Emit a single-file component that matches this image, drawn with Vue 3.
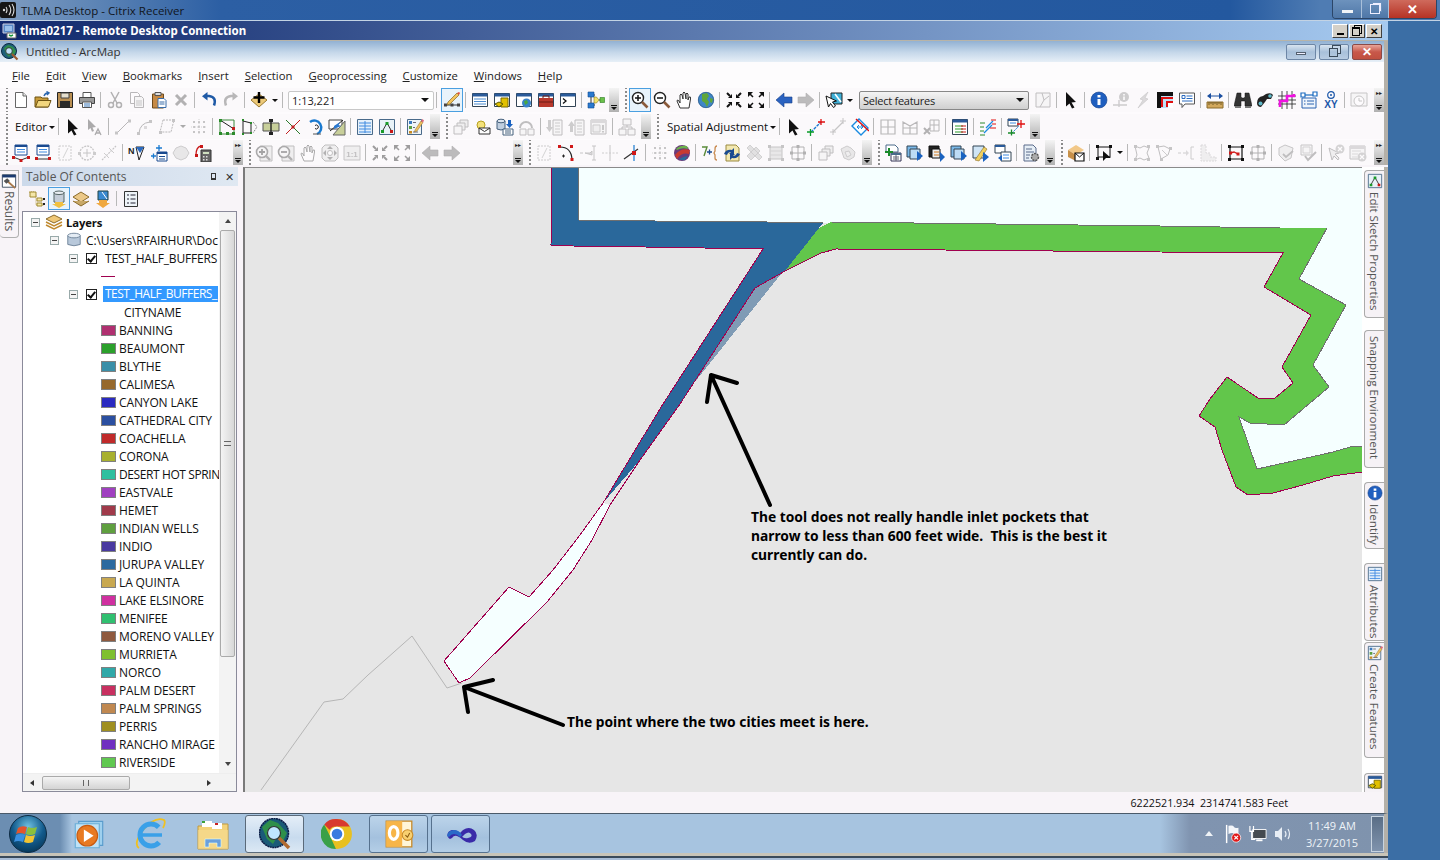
<template>
  <div class="screen">
    <!-- icon sprite -->
    <svg class="sprite" xmlns="http://www.w3.org/2000/svg">
      <symbol id="new" viewBox="0 0 18 18"><path d="M3.5 1.5h7.5l3.5 3.5v11.500h-11z" fill="#fff" stroke="#666"/><path d="M11 1.500v3.500h3.500" fill="#e8e8e8" stroke="#666"/></symbol>
      <symbol id="open" viewBox="0 0 18 18"><path d="M1 6h6l1 1h6v9H1z" fill="#c79a3a" stroke="#6d5312"/><path d="M1.500 16l2.500-6.500h13l-2.500 6.500z" fill="#f2d67e" stroke="#6d5312"/><path d="M10 5q1-3 4-3M12.500 0.500l2.500 1.500-2 2" fill="none" stroke="#2a66b0" stroke-width="1.400"/></symbol>
      <symbol id="save" viewBox="0 0 18 18"><path d="M1.500 1.500h15v15h-15z" fill="#b98f52" stroke="#222"/><path d="M5 2h8v5H5z" fill="#e6e0cf" stroke="#444"/><path d="M4 10h10v6.500H4z" fill="#2a2a2a"/></symbol>
      <symbol id="print" viewBox="0 0 18 18"><path d="M5 1.500h8v5H5z" fill="#fff" stroke="#555"/><path d="M1.500 6.500h15v6h-15z" fill="#9a9a9a" stroke="#444"/><path d="M4.500 11h9v5.500h-9z" fill="#fff" stroke="#555"/><path d="M6 13h6M6 15h6" stroke="#3a76b8"/></symbol>
      <symbol id="cut" viewBox="0 0 18 18"><path d="M5 1l6 11M13 1L7 12" stroke="#444" stroke-width="1.500" fill="none"/><circle cx="5" cy="14" r="2.500" fill="none" stroke="#444" stroke-width="1.500"/><circle cx="13" cy="14" r="2.500" fill="none" stroke="#444" stroke-width="1.500"/></symbol>
      <symbol id="copy" viewBox="0 0 18 18"><path d="M2.500 1.500h7l2 2v9h-9z" fill="#fff" stroke="#555"/><path d="M6.500 5.500h7l2 2v9h-9z" fill="#eee" stroke="#555"/><path d="M8 10h6M8 12h6M8 14h6" stroke="#777"/></symbol>
      <symbol id="paste" viewBox="0 0 18 18"><path d="M2.500 3h11v14h-11z" fill="#c68a45" stroke="#6d4a1a"/><path d="M5 1.500h6v3H5z" fill="#ddd" stroke="#555"/><path d="M8 7.500h6l2 2v7H8z" fill="#fff" stroke="#3a6ca8"/><path d="M9.500 11h5M9.500 13h5" stroke="#3a6ca8"/></symbol>
      <symbol id="del" viewBox="0 0 18 18"><path d="M4 4l10 10M14 4L4 14" stroke="#444" stroke-width="3"/></symbol>
      <symbol id="undo" viewBox="0 0 18 18"><path d="M14 14.500Q17 6 9 5H6" fill="none" stroke="#1f5aa6" stroke-width="2.500"/><path d="M7.500 1L2 5.200l5.500 4.300z" fill="#1f5aa6"/></symbol>
      <symbol id="redo" viewBox="0 0 18 18"><path d="M4 14.500Q1 6 9 5h3" fill="none" stroke="#1f5aa6" stroke-width="2.500"/><path d="M10.500 1L16 5.200l-5.500 4.300z" fill="#1f5aa6"/></symbol>
      <symbol id="add" viewBox="0 0 18 18"><path d="M9 3l8 6-8 7-8-7z" fill="#edc978" stroke="#9a7a30"/><path d="M9 1v11M3.500 6.500h11" stroke="#000" stroke-width="2.400"/></symbol>
      <symbol id="editbtn" viewBox="0 0 18 18"><path d="M2 14h14" stroke="#333"/><path d="M1 12.500h3v3H1zM7.500 12.500h3v3h-3zM14 12.500h3v3h-3z" fill="#444"/><path d="M5 11L14 2l2 2-9 9-3 1z" fill="#f3c35c" stroke="#8a6a20" stroke-width=".7"/><path d="M14 2l2 2 1-2-1-1z" fill="#e0503c"/></symbol>
      <symbol id="wintable" viewBox="0 0 18 18"><path d="M1.500 2.500h15v13h-15z" fill="#fff" stroke="#345"/><path d="M1.500 2.500h15v3h-15z" fill="#2a5a9a"/><path d="M3 8h12M3 10.500h12M3 13h12" stroke="#4a8ad0"/></symbol>
      <symbol id="windb" viewBox="0 0 18 18"><path d="M1.500 2.500h15v13h-15z" fill="#fff" stroke="#345"/><path d="M1.500 2.500h15v3h-15z" fill="#2a5a9a"/><path d="M8 7h7v9H8z" fill="#e2c000" stroke="#7a6a00"/><path d="M2 13l4-2 4 2-4 3z" fill="#e2c000" stroke="#5a5a00"/></symbol>
      <symbol id="winglobe" viewBox="0 0 18 18"><path d="M1.500 2.500h15v13h-15z" fill="#fff" stroke="#345"/><path d="M1.500 2.500h15v3h-15z" fill="#2a5a9a"/><circle cx="11.500" cy="12" r="4.500" fill="#3a82c8"/><path d="M9 10l3-1 1 3-3 2z" fill="#4aa840"/></symbol>
      <symbol id="winred" viewBox="0 0 18 18"><path d="M1.500 2.500h15v13h-15z" fill="#fff" stroke="#345"/><path d="M1.500 2.500h15v3h-15z" fill="#2a5a9a"/><path d="M2 7h14v9H2z" fill="#b8382c"/><path d="M6 7v-2h6v2M2 11h14" stroke="#6a1a14" fill="none"/></symbol>
      <symbol id="winpy" viewBox="0 0 18 18"><path d="M1.500 2.500h15v13h-15z" fill="#fff" stroke="#345"/><path d="M1.500 2.500h15v3h-15z" fill="#2a5a9a"/><path d="M4 7.500l3 2.500-3 2.500" stroke="#111" stroke-width="1.300" fill="none"/></symbol>
      <symbol id="model" viewBox="0 0 18 18"><path d="M4 4v10M4 4h4M4 14h4M12 9h2" stroke="#333" fill="none"/><path d="M1 1h6v5H1zM1 12h6v5H1z" fill="#2a7ad0" stroke="#134a90" stroke-width=".6"/><path d="M7 6l2.500 0 2.500 3-2.500 3H7z" fill="#f2e26a" stroke="#8a7a20" stroke-width=".6"/><path d="M13 6.500h4.500v5H13z" fill="#6ac04a" stroke="#2a7a20" stroke-width=".6"/></symbol>
      <symbol id="zoomin" viewBox="0 0 18 18"><circle cx="7" cy="7" r="5.500" fill="#fff" stroke="#222" stroke-width="1.400"/><path d="M11 11l5.500 5.500" stroke="#8a5a3a" stroke-width="2.600"/><path d="M4 7h6M7 4v6" stroke="#111" stroke-width="1.500"/></symbol>
      <symbol id="zoomout" viewBox="0 0 18 18"><circle cx="7" cy="7" r="5.500" fill="#fff" stroke="#222" stroke-width="1.400"/><path d="M11 11l5.500 5.500" stroke="#8a5a3a" stroke-width="2.600"/><path d="M4 7h6" stroke="#111" stroke-width="1.500"/></symbol>
      <symbol id="zin2" viewBox="0 0 18 18"><path d="M5 2h12v15H5z" fill="#ddd" stroke="#666"/><circle cx="7" cy="8" r="5.500" fill="#eee" stroke="#333" stroke-width="1.600"/><path d="M11 12l4 4" stroke="#444" stroke-width="2.400"/><path d="M4 8h6M7 5v6" stroke="#222" stroke-width="1.800"/></symbol>
      <symbol id="zout2" viewBox="0 0 18 18"><path d="M5 2h12v15H5z" fill="#ddd" stroke="#666"/><circle cx="7" cy="8" r="5.500" fill="#eee" stroke="#333" stroke-width="1.600"/><path d="M11 12l4 4" stroke="#444" stroke-width="2.400"/><path d="M4 8h6" stroke="#222" stroke-width="1.800"/></symbol>
      <symbol id="dirpan" viewBox="0 0 18 18"><path d="M4 1h10l3 3v10l-3 3H4l-3-3V4z" fill="#ddd" stroke="#666"/><path d="M9 2l3 3H6zM9 16l3-3H6zM2 9l3-3v6zM16 9l-3-3v6z" fill="#444"/><circle cx="9" cy="9" r="2.500" fill="#fff" stroke="#666"/></symbol>
      <symbol id="pan" viewBox="0 0 18 18"><path d="M5 17L2 10q0-2 2 0l1 2V4q1-2 2 0l1 4V2q1-2 2 0l1 6V3q1-2 2 0v6l1-3q2-1 1.500 2L14 17z" fill="#fff" stroke="#333"/></symbol>
      <symbol id="globe" viewBox="0 0 18 18"><circle cx="9" cy="9" r="8" fill="#3f86c6"/><path d="M5 3l5-1 2 3-2 3 2 3-2 5-2-4-3-2zM13 7l3 1-1 4-2-1z" fill="#5fa63a"/><circle cx="9" cy="9" r="7.700" fill="none" stroke="#2a4e78" stroke-width=".6"/></symbol>
      <symbol id="fixin" viewBox="0 0 18 18"><path d="M2 2l3 3M16 2l-3 3M2 16l3-3M16 16l-3-3" stroke="#111" stroke-width="2"/><path d="M7 3v4H3zM11 3v4h4zM7 15v-4H3zM11 15v-4h4z" fill="#111"/></symbol>
      <symbol id="fixout" viewBox="0 0 18 18"><path d="M1 1h5l-5 5zM17 1v5l-5-5zM1 17v-5l5 5zM17 17h-5l5-5z" fill="#111"/><path d="M3 3l3 3M15 3l-3 3M3 15l3-3M15 15l-3-3" stroke="#111" stroke-width="1.500"/></symbol>
      <symbol id="back" viewBox="0 0 18 18"><path d="M1 9l8-7v4h8v6H9v4z" fill="#2a62c0" stroke="#1a3f88" stroke-width=".6"/></symbol>
      <symbol id="fwd" viewBox="0 0 18 18"><path d="M17 9L9 2v4H1v6h8v4z" fill="#2a62c0" stroke="#1a3f88" stroke-width=".6"/></symbol>
      <symbol id="selfeat" viewBox="0 0 18 18"><path d="M6 2h11v11H6z" fill="#3fb0d8" stroke="#222"/><path d="M10 3l6 8" stroke="#fff" stroke-width="1.500"/><path d="M1 5l2.500 11 2-3.500 3 4 2-1.500-3-4 4-1z" fill="#fff" stroke="#111"/></symbol>
      <symbol id="edit" viewBox="0 0 18 18"><path d="M2 2h14v14H2z" fill="#eee" stroke="#666"/><path d="M8 2l2 7-4 7M10 9l5-4" stroke="#666" fill="none"/></symbol>
      <symbol id="arrow" viewBox="0 0 18 18"><path d="M4 1l10 10-4.500.5 3 5-2.500 1-2.500-5L4 15.500z" fill="#111"/></symbol>
      <symbol id="arrowa" viewBox="0 0 18 18"><path d="M2 1l8 8-3.500.5L8 13l-2 .8L4.500 10 2 12z" fill="#333"/><path d="M9 17l3-6 3 6M10.500 15h3" stroke="#333" stroke-width="1.300" fill="none"/></symbol>
      <symbol id="identify" viewBox="0 0 18 18"><circle cx="9" cy="9" r="8" fill="#1f5fbf" stroke="#123e88" stroke-width=".6"/><path d="M7.500 4h3v2.500h-3zM7.500 8h3v6h-3z" fill="#fff"/></symbol>
      <symbol id="hyper" viewBox="0 0 18 18"><circle cx="12" cy="6" r="5" fill="#888"/><path d="M1 14h14M7 9v7" stroke="#888" stroke-width="1.400"/><path d="M11.200 3h1.600v1.500h-1.600zM11.200 5.500h1.600V9h-1.600z" fill="#fff"/></symbol>
      <symbol id="bolt" viewBox="0 0 18 18"><path d="M14 1L6 8l3 1-5 8 10-9-3-1z" fill="#aaa" stroke="#777" stroke-width=".6"/></symbol>
      <symbol id="redcorner" viewBox="0 0 18 18"><path d="M1 1h16v4H5v12H1z" fill="#111"/><path d="M5 5h12v12H5z" fill="#bfe0f5"/><path d="M6 16V7h11M11 16v-5h6" stroke="#e01010" stroke-width="2" fill="none"/><path d="M12 12h5v5h-5z" fill="#fff"/></symbol>
      <symbol id="msg" viewBox="0 0 18 18"><path d="M1.500 2h15v11H7l-3 3.500V13H1.500z" fill="#fff" stroke="#555"/><path d="M4 4.500h3v3H4zM8.500 5h6M8.500 7.500h6M4 10h10.500" stroke="#2a6ac0" fill="none"/></symbol>
      <symbol id="measure" viewBox="0 0 18 18"><path d="M1 11h16v6H1z" fill="#d2a85c" stroke="#8a6a2a"/><path d="M3 11v3M5 11v2M7 11v3M9 11v2M11 11v3M13 11v2M15 11v3" stroke="#5a4a1a" stroke-width=".8"/><path d="M1 5l4-3v6zM17 5l-4-3v6z" fill="#1a4ea0"/><path d="M5 5h8" stroke="#1a4ea0"/></symbol>
      <symbol id="binoc" viewBox="0 0 18 18"><path d="M3 2h4v4l1 1h2l1-1V2h4l3 13h-7V10H7v5H0z" fill="#333" stroke="#111" stroke-width=".5"/><path d="M1 15h6v2H1zM11 15h6v2h-6z" fill="#777"/></symbol>
      <symbol id="binoc2" viewBox="0 0 18 18"><path d="M1 12q0-6 6-7l3-2q5-2 7 1l-2 4-4 0-2 3-4 5q-4 0-4-4z" fill="#222"/><circle cx="4.500" cy="12.500" r="2" fill="#5fb8c8"/><circle cx="14" cy="5" r="1.800" fill="#5fb8c8"/></symbol>
      <symbol id="magenta" viewBox="0 0 18 18"><path d="M0 5h18M0 9h18M0 13h18M4 0v18M9 0v18M14 0v18" stroke="#222" stroke-width=".8"/><path d="M2 16v-6h7V5h7V3" stroke="#f010e0" stroke-width="2.600" fill="none"/></symbol>
      <symbol id="net" viewBox="0 0 18 18"><path d="M2 7h14v10H2z" fill="#eef4fb" stroke="#2a62b0"/><path d="M7 10h7M7 13h7M4 10h1.500M4 13h1.500" stroke="#2a62b0"/><path d="M1 2h4v4H1zM13 1h4v4h-4z" fill="#fff" stroke="#1a6ac0" stroke-width="1.200"/><path d="M5 4h8" stroke="#1a6ac0" stroke-width="1.200"/></symbol>
      <symbol id="xy" viewBox="0 0 18 18"><circle cx="9" cy="4" r="3.300" fill="none" stroke="#1a56a8" stroke-width="1.200"/><circle cx="9" cy="4" r="1" fill="#1a56a8"/><text x="9" y="16.500" font-size="10" font-weight="700" font-family="Liberation Sans" text-anchor="middle" fill="#1a56a8">XY</text></symbol>
      <symbol id="clock" viewBox="0 0 18 18"><path d="M1 2h16v13H1z" fill="#eee" stroke="#777"/><circle cx="9" cy="10" r="5" fill="#fff" stroke="#777"/><path d="M9 7v3h3" stroke="#777" fill="none"/></symbol>
      <symbol id="line" viewBox="0 0 18 18"><path d="M3 15L15 3" stroke="#555"/><path d="M1 13.500h3v3H1zM14 1.500h3v3h-3z" fill="#777"/></symbol>
      <symbol id="curve" viewBox="0 0 18 18"><path d="M3 15Q4 5 14 4" stroke="#555" fill="none"/><path d="M1 14h3v3H1zM13 2h3v3h-3z" fill="#777"/><path d="M8 8h3v3H8z" fill="#aaa"/></symbol>
      <symbol id="poly" viewBox="0 0 18 18"><path d="M5 2h11l-3 12H2z" fill="none" stroke="#555" stroke-dasharray="2 1"/><path d="M1 13h3v3H1zM14 1h3v3h-3z" fill="#777"/></symbol>
      <symbol id="dots" viewBox="0 0 18 18"><path d="M3 3h2v2H3zM8 3h2v2H8zM13 3h2v2h-2zM3 8h2v2H3zM8 8h2v2H8zM13 8h2v2h-2zM3 13h2v2H3zM8 13h2v2H8zM13 13h2v2h-2z" fill="#777"/><path d="M1 9h16M9 1v16" stroke="#999" stroke-dasharray="1 1"/></symbol>
      <symbol id="sk1" viewBox="0 0 18 18"><path d="M2 2h14v14H2z" fill="none" stroke="#3a8a3a"/><path d="M2 2l14 9" stroke="#222"/><path d="M1 1h3v3H1zM14 14h3v3h-3zM1 14h3v3H1zM8 14h3v3H8z" fill="#2a8a2a"/><path d="M14 9h3v3h-3z" fill="#c02020"/></symbol>
      <symbol id="sk2" viewBox="0 0 18 18"><path d="M3 1v16M3 3l8 2v10H3" stroke="#222" fill="none"/><path d="M2 1h2v2H2zM2 15h2v2H2zM10 4h2v2h-2zM10 14h2v2h-2z" fill="#2a8a2a"/><path d="M13 4l4 5-4 6" stroke="#666" stroke-dasharray="1 1" fill="none"/></symbol>
      <symbol id="split" viewBox="0 0 18 18"><path d="M1 5h16v8H1z" fill="#c8cf9a" stroke="#555"/><path d="M9 1v16" stroke="#222" stroke-width="1.400"/><path d="M7 1h4v3H7zM7 14h4v3H7z" fill="#222"/></symbol>
      <symbol id="redx" viewBox="0 0 18 18"><path d="M2 2l14 14" stroke="#2a7a2a"/><path d="M16 2L2 16" stroke="#c02020"/><path d="M7.500 7.500h3v3h-3z" fill="#c02020"/></symbol>
      <symbol id="cycle" viewBox="0 0 18 18"><path d="M4 4a7 7 0 1 1 7 12" fill="none" stroke="#1a7ad0" stroke-width="2.400"/><path d="M7 16H15" stroke="#555"/><path d="M9 7.500a2 2 0 1 1 0 3" fill="none" stroke="#222"/></symbol>
      <symbol id="trim" viewBox="0 0 18 18"><path d="M1 2h13v9H1z" fill="#fff" stroke="#444"/><path d="M17 3v14H5z" fill="#c8cf9a" stroke="#666"/><path d="M2 13L15 2" stroke="#222"/><path d="M6 8l6-4-1.500 3 2.500 1-7 3z" fill="#2a7ad0"/></symbol>
      <symbol id="table" viewBox="0 0 18 18"><path d="M1.500 1.500h15v15h-15z" fill="#e4f0fb" stroke="#4a6a8a"/><path d="M3 5h12M3 8h12M3 11h12M3 14h12M9 3v12" stroke="#3f8ae0"/></symbol>
      <symbol id="props" viewBox="0 0 18 18"><path d="M1.500 1.500h15v15h-15z" fill="#e8f2f8" stroke="#4a6a8a"/><path d="M4.500 13L9 5l4.500 8" stroke="#333" fill="none"/><path d="M3 12h3v3H3zM7.500 4h3v3h-3z" fill="#1a9a2a"/><path d="M12 12h3v3h-3z" fill="#c81818"/></symbol>
      <symbol id="form" viewBox="0 0 18 18"><path d="M1.500 1.500h14v15h-14z" fill="#eef4f8" stroke="#4a6a8a"/><path d="M3 3h3v3H3z" fill="#3a7ac0"/><path d="M3 8h3v3H3z" fill="#5aa040"/><path d="M3 13h3v2.500H3z" fill="#c88a20"/><path d="M7 4.500h3M7 9.500h2M7 14h5" stroke="#667"/><path d="M9 12L15 3l2 1.500-6 8.500-2.500 1z" fill="#f0c060" stroke="#8a6a20" stroke-width=".5"/><path d="M15 3l2 1.500 1-2-1.500-1.500z" fill="#e06a7a"/></symbol>
      <symbol id="stack" viewBox="0 0 18 18"><path d="M8 2h8v7H8z" fill="#ddd" stroke="#666"/><path d="M5 5h8v7H5z" fill="#ddd" stroke="#666"/><path d="M2 8h8v8H2z" fill="#eee" stroke="#666"/></symbol>
      <symbol id="sun" viewBox="0 0 18 18"><circle cx="7" cy="7" r="4" fill="#f4e27a" stroke="#b8a020"/><path d="M5 10h11v6H5z" fill="#fff" stroke="#333"/><path d="M5 10l5.500 3.500L16 10" stroke="#333" fill="none"/></symbol>
      <symbol id="dbarrow" viewBox="0 0 18 18"><path d="M1 3v8q4 2 8 0V3" fill="#c0cfe0" stroke="#45607c"/><ellipse cx="5" cy="3" rx="4" ry="1.800" fill="#dde6f0" stroke="#45607c"/><path d="M7 11h10v6H7z" fill="#fff" stroke="#45607c"/><path d="M9 13h6M9 15h6" stroke="#45607c"/><path d="M12 2h3v4h2l-3.500 4L10 6h2z" fill="#1a62c0"/></symbol>
      <symbol id="arc" viewBox="0 0 18 18"><path d="M2 10a6 6 0 0 1 12 0" stroke="#666" stroke-width="2" fill="none"/><path d="M2 11h6v6H2zM10 11h6v6h-6z" fill="#eee" stroke="#666"/></symbol>
      <symbol id="docdn" viewBox="0 0 18 18"><path d="M7 2h9v15H7z" fill="#eee" stroke="#666"/><path d="M9 5h5M9 8h5M9 11h5M9 14h5" stroke="#888"/><path d="M2 2h3v7h2l-3.500 5L0 9h2z" fill="#888"/></symbol>
      <symbol id="docup" viewBox="0 0 18 18"><path d="M7 2h9v15H7z" fill="#eee" stroke="#666"/><path d="M9 5h5M9 8h5M9 11h5M9 14h5" stroke="#888"/><path d="M2 14h3V8h2L3.500 3 0 8h2z" fill="#888"/></symbol>
      <symbol id="docbang" viewBox="0 0 18 18"><path d="M1 2h15v14H1z" fill="#eee" stroke="#666"/><path d="M1 2h15v3H1z" fill="#aaa"/><path d="M3 7h7v7H3z" fill="#ddd" stroke="#888"/><path d="M13 7v5M13 13v1.500" stroke="#555" stroke-width="1.500"/></symbol>
      <symbol id="flow" viewBox="0 0 18 18"><path d="M5 1h8v6H5zM1 11h7v6H1zM10 11h7v6h-7z" fill="#eee" stroke="#666"/><path d="M9 7v2M4 11V9h10v2" stroke="#666" fill="none"/></symbol>
      <symbol id="rg" viewBox="0 0 18 18"><path d="M4 14L14 4" stroke="#1a7ad0" stroke-width="1.400" stroke-dasharray="3 1"/><path d="M11 4h7M14 1v6" stroke="#e01010" stroke-width="1.300"/><path d="M0 14h7M3.500 11v7" stroke="#0a9a2a" stroke-width="1.300"/></symbol>
      <symbol id="rg2" viewBox="0 0 18 18"><path d="M4 14L14 4" stroke="#777" stroke-width="1.300"/><path d="M11 3h6M14 0v6" stroke="#777"/><path d="M1 14h6M4 11v6" stroke="#777"/></symbol>
      <symbol id="bluerect" viewBox="0 0 18 18"><path d="M8 1l9 9-7 7-9-9z" fill="#fff" stroke="#1a8ae0" stroke-width="1.400"/><path d="M6 9h6M6 9l2-2M6 9l2 2M12 9l-2-2M12 9l-2 2" stroke="#1a8ae0"/><path d="M5 1l13 12" stroke="#e01010" stroke-width="1.400"/></symbol>
      <symbol id="grid" viewBox="0 0 18 18"><path d="M2 2h14v14H2zM9 2v14M2 9h14" fill="none" stroke="#555" stroke-width="1.200"/></symbol>
      <symbol id="envl" viewBox="0 0 18 18"><path d="M2 4l7 4 7-4v12H2zM2 10h14M9 8v8" fill="none" stroke="#555" stroke-width="1.200"/></symbol>
      <symbol id="gridx" viewBox="0 0 18 18"><path d="M7 2h9v11H7zM7 7h9M11 2v11" fill="none" stroke="#555"/><path d="M1 10l6 6M7 10l-6 6" stroke="#444" stroke-width="2"/></symbol>
      <symbol id="tarrow" viewBox="0 0 18 18"><path d="M1.500 1.500h15v15h-15z" fill="#fff" stroke="#345"/><path d="M1.500 1.500h15v3h-15z" fill="#2a5a9a"/><path d="M4 8h8M4 11h8M4 14h8" stroke="#2a9a2a"/><path d="M10 8h5M10 11h5M10 14h5" stroke="#c81818"/></symbol>
      <symbol id="lines" viewBox="0 0 18 18"><path d="M1 5h5M1 9h4M1 13h4M1 17h5" stroke="#2a8a2a"/><path d="M5 15L13 7M7 10l7-7" stroke="#1a8ae0" stroke-width="1.300"/><path d="M12 2h5M13 6h4M11 10h6" stroke="#e01010"/></symbol>
      <symbol id="winplus" viewBox="0 0 18 18"><path d="M1 1h10v7H1z" fill="#fff" stroke="#345"/><path d="M1 1h10v2H1z" fill="#2a5a9a"/><path d="M3 5h6" stroke="#3a8ae0"/><path d="M5 15L12 8" stroke="#1a7ad0" stroke-dasharray="2 1"/><path d="M10 6h8M14 2v8" stroke="#e01010" stroke-width="1.300"/><path d="M1 15h7M4.500 11.500v6" stroke="#1a8a2a" stroke-width="1.300"/></symbol>
      <symbol id="t3a" viewBox="0 0 18 18"><path d="M3 1h12v10H3z" fill="#fff" stroke="#1a4a90"/><path d="M3 1h12v2H3z" fill="#1a4a90"/><path d="M5 5.500h8M5 8h8" stroke="#3f8ae0"/><path d="M1 13l8 3 8-3" stroke="#333" fill="none"/><path d="M0 12h3v3H0zM7.500 15h3v3h-3zM15 12h3v3h-3z" fill="#c81818"/></symbol>
      <symbol id="t3b" viewBox="0 0 18 18"><path d="M3 1h12v10H3z" fill="#fff" stroke="#1a4a90"/><path d="M3 1h12v2H3z" fill="#1a4a90"/><path d="M5 5.500h8M5 8h8" stroke="#3f8ae0"/><path d="M2 15h14" stroke="#333"/><path d="M1 13h3v3H1zM14 13h3v3h-3z" fill="#c81818"/></symbol>
      <symbol id="dotrect" viewBox="0 0 18 18"><path d="M3 2h12v14H3z" fill="none" stroke="#888" stroke-dasharray="2 1"/><path d="M12 4l-5 10" stroke="#999"/></symbol>
      <symbol id="circplus" viewBox="0 0 18 18"><circle cx="9" cy="9" r="7" fill="none" stroke="#777" stroke-dasharray="2 1" stroke-width="1.300"/><path d="M5 9h8M9 5v8" stroke="#777"/><path d="M0 8h3v3H0zM15 8h3v3h-3z" fill="#888"/></symbol>
      <symbol id="linedots" viewBox="0 0 18 18"><path d="M2 16L16 2" stroke="#777" stroke-dasharray="2 1" stroke-width="1.200"/><path d="M4 9l5 5M9 4l5 5" stroke="#888"/></symbol>
      <symbol id="north" viewBox="0 0 18 18"><text x="0" y="10" font-size="9" font-weight="700" font-family="Liberation Sans" fill="#222">N</text><path d="M8 3h8l-5 13z" fill="none" stroke="#222"/><path d="M8 3h8l-4 6z" fill="#2a6ac0"/></symbol>
      <symbol id="plustable" viewBox="0 0 18 18"><path d="M7 8h10v9H7z" fill="#fff" stroke="#1a4a90"/><path d="M7 8h10v2H7z" fill="#1a4a90"/><path d="M9 12.500h6M9 15h6" stroke="#1a4a90"/><path d="M9 1v6M6 4h6M1 12h5M3.500 9.500v5" stroke="#1a7ad0" stroke-width="1.300"/></symbol>
      <symbol id="octa" viewBox="0 0 18 18"><path d="M9 2l5 2 3 5-3 5-5 2-5-2-3-5 3-5z" fill="#ccc" stroke="#888"/></symbol>
      <symbol id="calc" viewBox="0 0 18 18"><path d="M2 11Q2 3 7 2" stroke="#c81818" stroke-width="1.300" fill="none"/><path d="M6 1h3v3H6zM1 10h3v3H1z" fill="#c81818"/><path d="M7 6h10v12H7z" fill="#666" stroke="#333"/><path d="M9 8h6v2H9z" fill="#cfe0c0"/><path d="M9 12h1.500v1.500H9zM12 12h1.500v1.500H12zM9 15h1.500v1.500H9zM12 15h1.500v1.500H12z" fill="#ddd"/></symbol>
      <symbol id="one" viewBox="0 0 18 18"><path d="M1 2h16v14H1z" fill="#ddd" stroke="#777"/><text x="9" y="13" font-size="8" font-family="Liberation Sans" font-weight="700" text-anchor="middle" fill="#666">1:1</text></symbol>
      <symbol id="curvered" viewBox="0 0 18 18"><path d="M3 3Q14 3 15 15" stroke="#222" fill="none" stroke-width="1.200"/><path d="M1 1h3v3H1zM13.500 14h3v3h-3zM13 1h3v3h-3z" fill="#d01818"/><path d="M5 12h3M6.500 10.500v3" stroke="#222"/></symbol>
      <symbol id="tojoin" viewBox="0 0 18 18"><path d="M1 9h3M6 9h5l2-2v4z" stroke="#777" fill="#aaa"/><path d="M15 2v14M13 2h4M13 16h4" stroke="#777"/></symbol>
      <symbol id="cross" viewBox="0 0 18 18"><path d="M9 1v16" stroke="#777"/><path d="M1 9h16" stroke="#888" stroke-dasharray="2 1.500"/></symbol>
      <symbol id="redblue" viewBox="0 0 18 18"><path d="M1 15L15 5" stroke="#333" stroke-width="1.200"/><path d="M11 1v16" stroke="#1a7ad0" stroke-width="1.200"/><path d="M9 7h4v4H9z" fill="#d01818"/></symbol>
      <symbol id="sphere" viewBox="0 0 18 18"><circle cx="9" cy="9" r="8" fill="#6a3a7a"/><path d="M2 11q6-8 15-5l-1 4q-7-2-12 5z" fill="#c83a30"/><path d="M3 5q4-4 11-3l1 3q-6-2-11 1z" fill="#6ab04a"/><path d="M6 15q5-3 9-3l-3 4q-3 1-6-1z" fill="#2a6a9a"/></symbol>
      <symbol id="sevplus" viewBox="0 0 18 18"><path d="M1 3h5l-3 9" stroke="#5a8a3a" stroke-width="1.400" fill="none"/><path d="M6 8h5M8.500 5.500v5" stroke="#1a4a90" stroke-width="1.300"/><path d="M16 2q-2 0-2 3v2l-1 2 1 2v3q0 2 2 2" stroke="#c88a50" stroke-width="1.300" fill="none"/></symbol>
      <symbol id="docsw" viewBox="0 0 18 18"><path d="M3 1h10l3 3v13H3z" fill="#f3e8b0" stroke="#9a8a40"/><path d="M1 10q2-5 8-4l2-2v6H6l2-2q-3 0-4 3zM17 10q-2 5-8 4l-2 2v-6h5l-2 2q3 0 4-3z" fill="#1a4a90"/></symbol>
      <symbol id="tool" viewBox="0 0 18 18"><path d="M2 4l3-3 12 12-3 3zM6 16l-4-4 9-9 4 4z" fill="#bbb" stroke="#777" stroke-width=".7"/></symbol>
      <symbol id="rectnodes" viewBox="0 0 18 18"><path d="M3 3h12v12H3z" fill="#ccc" stroke="#777"/><path d="M3 7h12M3 11h12" stroke="#999"/><path d="M1 1h3v3H1zM14 1h3v3h-3zM1 14h3v3H1zM14 14h3v3h-3z" fill="#777"/></symbol>
      <symbol id="nodes" viewBox="0 0 18 18"><path d="M3 3h12v12H3zM9 3v12M3 9h12" fill="none" stroke="#444"/><path d="M7.500 1h3v3h-3zM1 7.500h3v3H1zM14 7.500h3v3h-3zM7.500 14h3v3h-3z" fill="#444"/></symbol>
      <symbol id="blob" viewBox="0 0 18 18"><path d="M2 5l6-3 4 2 4 4-1 5-5 3-5-2z" fill="#ccc" stroke="#888"/><path d="M6 8l4-1 2 4-4 2z" fill="#ddd" stroke="#888"/></symbol>
      <symbol id="tblplus" viewBox="0 0 18 18"><path d="M2 1h9l3 3v4H2z" fill="#fff" stroke="#4a6a8a"/><path d="M7 9h10v8H7z" fill="#fff" stroke="#335"/><path d="M7 9h10v2H7z" fill="#4a6a8a"/><path d="M9 13h6M9 15h6M12 11v6" stroke="#667"/><path d="M5 4v8M1 8h8" stroke="#1a8a2a" stroke-width="2"/></symbol>
      <symbol id="winarrow" viewBox="0 0 18 18"><path d="M1 2h10v11H1z" fill="#7ab8e8" stroke="#345"/><path d="M4 5h10v10H4z" fill="#bcdcf5" stroke="#345"/><path d="M11 7l6 5-6 5z" fill="#1a62c0"/></symbol>
      <symbol id="winarrow2" viewBox="0 0 18 18"><path d="M1 2h10v11H1z" fill="#222" stroke="#111"/><path d="M4 5h8v9H4z" fill="#eee" stroke="#111"/><path d="M6 8h5M6 11h5" stroke="#d07a20"/><path d="M12 8l5 5-5 5z" fill="#1a62c0"/></symbol>
      <symbol id="penwin" viewBox="0 0 18 18"><path d="M1 2h11v12H1z" fill="#cfe4f5" stroke="#345"/><path d="M3 16L12 3l3 2-8 12z" fill="#f0d060" stroke="#8a6a20" stroke-width=".6"/><path d="M11 8l6 5-6 5z" fill="#1a62c0"/></symbol>
      <symbol id="tblarrow" viewBox="0 0 18 18"><path d="M1 1h10v8H1z" fill="#fff" stroke="#345"/><path d="M1 1h10v2H1z" fill="#2a5a9a"/><path d="M7 8h10v9H7z" fill="#fff" stroke="#345"/><path d="M9 11h6M9 14h6" stroke="#3f8ae0"/><path d="M8 11l-4 3 4 3z" fill="#1a62c0"/></symbol>
      <symbol id="docgear" viewBox="0 0 18 18"><path d="M2 1h9l3 3v13H2z" fill="#e6eef6" stroke="#5a6a8a"/><path d="M4 5h6M4 8h8M4 11h4M4 14h3" stroke="#5a6a8a"/><circle cx="13" cy="13" r="3.500" fill="#aaa" stroke="#555" stroke-width="1.400" stroke-dasharray="2 1"/></symbol>
      <symbol id="cube" viewBox="0 0 18 18"><path d="M1 6l8-5 8 5-8 5z" fill="#f2c888"/><path d="M1 6v7l8 4V11z" fill="#c89048"/><path d="M8 9h9v8H8z" fill="#fff" stroke="#111" stroke-width="1.200"/><path d="M8 9l4.500 4L17 9" fill="none" stroke="#111"/></symbol>
      <symbol id="blknodes" viewBox="0 0 18 18"><path d="M3 3h12v10H3z" fill="none" stroke="#111"/><path d="M1 1h3v3H1zM14 1h3v3h-3zM1 13h3v3H1z" fill="#111"/><path d="M8 7v10l3-3 5 0z" fill="#111"/></symbol>
      <symbol id="star" viewBox="0 0 18 18"><path d="M2 2l5 2 4-2 5 2-2 5 2 5-5 2-4-2-5 2 2-5z" fill="none" stroke="#666"/><path d="M1 1h3v3H1zM14 1h3v3h-3zM1 14h3v3H1zM14 14h3v3h-3z" fill="#777"/></symbol>
      <symbol id="star2" viewBox="0 0 18 18"><path d="M3 3l6-1 6 3-2 6-7 4z" fill="none" stroke="#666"/><path d="M1 1h3v3H1zM14 3h3v3h-3zM5 14h3v3H5z" fill="#777"/><path d="M7 6l6 6" stroke="#888"/></symbol>
      <symbol id="stepjoin" viewBox="0 0 18 18"><path d="M1 9h3M6 9h5" stroke="#888"/><path d="M9 6l3 3-3 3z" fill="#aaa"/><path d="M14 3h3M14 3v12h3" stroke="#888" fill="none"/></symbol>
      <symbol id="steps" viewBox="0 0 18 18"><path d="M2 1h5v8h4v4h6v4H2z" fill="#ddd" stroke="#aaa" stroke-dasharray="2 1"/></symbol>
      <symbol id="rednodes" viewBox="0 0 18 18"><path d="M3 3h12v12H3z" fill="none" stroke="#111" stroke-width="1.200"/><path d="M1 1h3v3H1zM14 1h3v3h-3zM1 14h3v3H1zM14 14h3v3h-3z" fill="#111"/><path d="M3 9l4-1 4 2" stroke="#d01818" stroke-width="1.300" fill="none"/><path d="M2 7.500h3v3H2zM9.500 8.500h3v3h-3z" fill="#d01818"/></symbol>
      <symbol id="checkmap" viewBox="0 0 18 18"><path d="M2 4l6-3 8 3-2 10-6 3-6-6z" fill="#ddd" stroke="#777"/><path d="M6 10l3 3 7-6" stroke="#666" stroke-width="1.800" fill="none"/></symbol>
      <symbol id="wincheck" viewBox="0 0 18 18"><path d="M2 1h11v10H2z" fill="#eee" stroke="#777"/><path d="M4 3h7v6H4z" fill="none" stroke="#999"/><path d="M6 12l3 4 8-8" stroke="#666" stroke-width="2" fill="none"/></symbol>
      <symbol id="curx" viewBox="0 0 18 18"><path d="M2 4l3 12 2-4 4 4 1-2-4-4 4-1z" fill="#ddd" stroke="#666"/><circle cx="13" cy="5" r="4.500" fill="#999"/><path d="M11 3l4 4M15 3l-4 4" stroke="#fff" stroke-width="1.300"/></symbol>
      <symbol id="winx" viewBox="0 0 18 18"><path d="M1 2h15v13H1z" fill="#eee" stroke="#777"/><path d="M1 2h15v3H1z" fill="#aaa"/><path d="M3 7h9M3 10h6M3 13h5" stroke="#aaa"/><circle cx="13" cy="13" r="4.500" fill="#999"/><path d="M11 11l4 4M15 11l-4 4" stroke="#fff" stroke-width="1.300"/></symbol>
      <symbol id="arcglobe" viewBox="0 0 18 18"><circle cx="8" cy="8" r="7.500" fill="#1f5f7a" stroke="#0a2a44"/><path d="M3 5l4-3 5 2 3 4-2 4-3-1-2 3-3-3z" fill="#2f8f4a"/><circle cx="8" cy="8" r="3.300" fill="#bfe0f8" stroke="#222" stroke-width=".8"/><path d="M11 11l5.500 5.500" stroke="#9a5a30" stroke-width="2.200"/></symbol>
      <symbol id="bookmark" viewBox="0 0 18 18"><path d="M1 6l8-4 8 4-8 4z" fill="#f0c878" stroke="#8a6a2a"/><path d="M1 9l8 4 8-4M1 12l8 4 8-4" fill="none" stroke="#c08a30" stroke-width="1.500"/></symbol>
      <symbol id="dbcyl" viewBox="0 0 18 18"><path d="M2 4v10q7 3 14 0V4" fill="#b8c8da" stroke="#6a7f96"/><ellipse cx="9" cy="4" rx="7" ry="2.600" fill="#e4ecf4" stroke="#6a7f96"/></symbol>
      <symbol id="tocnodes" viewBox="0 0 18 18"><path d="M1 2h5l2 4v9h8" fill="none" stroke="#b89a40" stroke-dasharray="1 1"/><path d="M2 2h6v5H2z" fill="#f4e6a8" stroke="#a08a30"/><path d="M9 8h5v3H9zM9 13h5v3H9z" fill="#f4e6a8" stroke="#a08a30"/><path d="M15 8h2v2h-2zM15 13h2v2h-2z" fill="#222"/></symbol>
      <symbol id="tocdb" viewBox="0 0 18 18"><path d="M4 2v10q5 2 10 0V2" fill="#c4cdd8" stroke="#566"/><ellipse cx="9" cy="2.800" rx="5" ry="1.800" fill="#e8edf2" stroke="#566"/><path d="M5 12h8v2h3l-7 4-7-4h3z" fill="#f0c040"/></symbol>
      <symbol id="tocvis" viewBox="0 0 18 18"><path d="M1 7l8-5 8 5-8 5z" fill="#ecc888" stroke="#8a6a2a"/><path d="M1 11l8 5 8-5" fill="#c8a868" stroke="#8a6a2a"/></symbol>
      <symbol id="tocsel" viewBox="0 0 18 18"><path d="M4 1h10v9H4z" fill="#3a8ad0" stroke="#244"/><path d="M8 2l5 7" stroke="#fff"/><path d="M5 10h8v3h3l-7 5-7-5h3z" fill="#f0a840"/></symbol>
      <symbol id="toclist" viewBox="0 0 18 18"><path d="M2.500 1.500h13v15h-13z" fill="#eef3f8" stroke="#333"/><path d="M5 5h2M5 9h2M5 13h2M8.500 5h5M8.500 9h5M8.500 13h5" stroke="#223" stroke-width="1.200"/></symbol>
      <symbol id="hammer" viewBox="0 0 18 18"><path d="M1.500 2h15v14h-15z" fill="#fff" stroke="#345"/><path d="M1.500 2h15v3h-15z" fill="#1a3a70"/><path d="M7 9l9 8" stroke="#a8784a" stroke-width="2"/><path d="M3 9l4-3 3 3-4 3z" fill="#555"/></symbol>
      <symbol id="media" viewBox="0 0 28 28"><path d="M5 3h21v21H5z" fill="#9ed0ee" stroke="#5a9ccc"/><path d="M2 5h21v21H2z" fill="#bfe2f6" stroke="#6aaed8"/><circle cx="12.500" cy="15.500" r="9" fill="#e87a22" stroke="#c85a10"/><path d="M9.500 10l8.500 5.500-8.500 5.500z" fill="#fff"/></symbol>
      <symbol id="ie" viewBox="0 0 32 32"><path d="M4 30Q-2 26 8 12Q20 -2 29 2Q31 4 28 10" fill="none" stroke="#f0c020" stroke-width="1.800"/><circle cx="16" cy="17" r="11" fill="none" stroke="#3aa0e8" stroke-width="5" stroke-dasharray="52 12" stroke-dashoffset="-8"/><path d="M7 17h20" stroke="#3aa0e8" stroke-width="3.500"/></symbol>
      <symbol id="explorer" viewBox="0 0 32 32"><path d="M1 8h13l2-2h15v25H1z" fill="#f2d27a" stroke="#c09a40"/><path d="M5 3h10v6H5z" fill="#fff"/><path d="M5 3h3v2H5z" fill="#3aa03a"/><path d="M15 5h10v6H15z" fill="#fff"/><path d="M18 5h3v2h-3z" fill="#c82020"/><path d="M1 12h30v19H1z" fill="#f6dc92" opacity=".6"/><path d="M8 29v-8h16v8h-4v-4h-8v4z" fill="#6aa0dc" stroke="#dff" stroke-width=".6"/></symbol>
      <symbol id="arcbig" viewBox="0 0 32 32"><circle cx="15" cy="15" r="14.500" fill="#1a5a78" stroke="#0a1a44" stroke-width="1.500" stroke-dasharray="2 .5"/><path d="M3 9l8-7 8 3 9 10-4 8-6-4-4 7-6-5z" fill="#2f8f4a"/><circle cx="15" cy="15" r="6.500" fill="#bfe6ff" stroke="#333" stroke-width="1.200"/><path d="M20 20l10 10" stroke="#b06a30" stroke-width="3.500"/></symbol>
      <symbol id="chrome" viewBox="0 0 30 30"><circle cx="15" cy="15" r="14" fill="#e8c020"/><path d="M15 1a14 14 0 0 1 12 7H15a7 7 0 0 0-7 3L3 6a14 14 0 0 1 12-5z" fill="#d83a30"/><path d="M3 6l6 12 5 11A14 14 0 0 1 3 6z" fill="#3aa048"/><circle cx="15" cy="15" r="6.800" fill="#fff"/><circle cx="15" cy="15" r="5" fill="#3a7ae0"/></symbol>
      <symbol id="outlook" viewBox="0 0 30 30"><path d="M3 3h24v24H3z" fill="#fff6d8" stroke="#c88a28" stroke-width="1.200"/><path d="M3 3h15v24H3z" fill="#f7b548"/><ellipse cx="10" cy="14" rx="4" ry="6" fill="none" stroke="#fff" stroke-width="3"/><circle cx="23" cy="16" r="5" fill="#f8d070" stroke="#c88a28"/><path d="M21 16l2 2 2-4" stroke="#8a5a10" fill="none"/></symbol>
      <symbol id="vs" viewBox="0 0 32 20"><path d="M5 15C0 12 3 5 9 6q5 1 7 5t7 3q5-1 3-4t-6 0l-3 3-3-3 4-4q6-4 11 0t1 11q-6 4-12-1-3-3-6-4t-5 2z" fill="#3a2aa8"/><path d="M2 12q1-6 7-6 5 0 8 5l-2 2q-3-3-6-3t-5 3z" fill="#2a6ac8"/></symbol>
      <symbol id="flag" viewBox="0 0 18 22"><path d="M2 1v20" stroke="#fff" stroke-width="1.600"/><path d="M4 2q5-1 6 1t5 1v8q-4 1-5-1t-6 0z" fill="#f3f6fa"/><circle cx="12.500" cy="15" r="5" fill="#e01818" stroke="#fff" stroke-width=".8"/><path d="M10.500 13l4 4M14.500 13l-4 4" stroke="#fff" stroke-width="1.300"/></symbol>
      <symbol id="netw" viewBox="0 0 20 20"><path d="M4 5h15v10H4z" fill="#444a50" stroke="#fff"/><path d="M8 16h7v2H8z" fill="#fff"/><path d="M1 1v6h4V1M3 7v9h4" stroke="#fff" stroke-width="1.300" fill="none"/></symbol>
      <symbol id="vol" viewBox="0 0 18 18"><path d="M1 6h3l4-4v14l-4-4H1z" fill="#e8eef5"/><path d="M11 6q2 3 0 6M14 4q3 5 0 10" stroke="#e8eef5" fill="none" stroke-width="1.200"/></symbol>
      <symbol id="citrix" viewBox="0 0 16 16"><rect width="16" height="16" rx="2" fill="#161616"/><circle cx="4" cy="8" r="1.200" fill="#ddd"/><path d="M6 5q2 3 0 6M9 3q3.500 5 0 10M12 2q4 6 0 12" stroke="#ddd" stroke-width="1.100" fill="none"/></symbol>
      <symbol id="rdpicon" viewBox="0 0 16 16"><path d="M1 1h11v9H1z" fill="#5a8ac8" stroke="#ccd"/><path d="M3 3h7v5H3z" fill="#9ac0ea"/><path d="M5 10h9v5H5z" fill="#fff" stroke="#666"/><path d="M7 12l2 1 2-1" stroke="#1a9a3a" stroke-width="1.400" fill="none"/></symbol>
    </svg>

    <div class="citrix">
      <svg class="citrix-ico"><use href="#citrix" /></svg>
      <span class="citrix-title">TLMA Desktop - Citrix Receiver</span>
      <div class="citrix-btns">
        <div class="cb cb-min"><i></i></div>
        <div class="cb cb-max"><i></i></div>
        <div class="cb cb-close">✕</div>
      </div>
    </div>

    <div class="rdp-row">
      <div class="rdp">
        <div class="rdp-title">
          <svg class="rdp-ico"><use href="#rdpicon" /></svg>
          <span>tlma0217 - Remote Desktop Connection</span>
          <div class="rdp-btns">
            <div class="rb"><i class="rb-min"></i></div>
            <div class="rb"><i class="rb-rest"></i></div>
            <div class="rb rb-x">✕</div>
          </div>
        </div>

        <div class="app-title">
          <svg class="app-ico"><use href="#arcglobe" /></svg>
          <span>Untitled - ArcMap</span>
          <div class="app-btns">
            <div class="ab"><i class="ab-min"></i></div>
            <div class="ab"><i class="ab-rest"></i></div>
            <div class="ab ab-close">✕</div>
          </div>
        </div>

        <div class="menu">
          <div v-for="m in menus" :key="m" class="menu-item">{{ m }}</div>
        </div>

        <div class="toolbars">
          <div v-for="(bar, bi) in bars" :key="bi" class="bar" :class="'bar' + bi">
            <template v-for="(it, i) in bar" :key="i">
              <div v-if="it.kind === 'grip'" class="grip"></div>
              <div v-else-if="it.kind === 'sep'" class="sep"></div>
              <div v-else-if="it.kind === 'drop'" class="drop" :class="{ off: it.off }"></div>
              <div v-else-if="it.kind === 'gap'" class="gap" :style="{ width: it.w + 'px' }"></div>
              <div v-else-if="it.kind === 'over'" class="over" :class="{ end: it.end }"><em v-if="it.dbl">▸▸</em></div>
              <div v-else-if="it.kind === 'text'" class="tb-text" :style="{ width: it.w + 'px' }">{{ it.label }}<b></b></div>
              <div v-else-if="it.kind === 'combo'" class="combo" :class="{ grey: it.grey }" :style="{ width: it.w + 'px' }">{{ it.label }}<b></b></div>
              <div v-else class="tb-btn" :class="{ on: it.on, off: it.off }">
                <svg class="ico"><use :href="'#' + it.name" /></svg>
              </div>
            </template>
          </div>
        </div>

        <div class="workspace">
          <div class="left-dock">
            <div class="results-tab">
              <svg class="tab-ico"><use href="#hammer" /></svg>
              <span>Results</span>
            </div>
          </div>

          <div class="toc">
            <div class="toc-head">
              <span>Table Of Contents</span>
              <div class="toc-head-btns"><em class="pin"></em><em class="close">✕</em></div>
            </div>
            <div class="toc-tools">
              <div class="tb-btn"><svg class="ico"><use href="#tocnodes" /></svg></div>
              <div class="tb-btn on"><svg class="ico"><use href="#tocdb" /></svg></div>
              <div class="tb-btn"><svg class="ico"><use href="#tocvis" /></svg></div>
              <div class="tb-btn"><svg class="ico"><use href="#tocsel" /></svg></div>
              <div class="sep"></div>
              <div class="tb-btn"><svg class="ico"><use href="#toclist" /></svg></div>
            </div>
            <div class="tree-box">
              <div class="tree-top">
                <div class="tree">
                  <div class="row lv0">
                    <i class="exp"></i><svg class="row-ico"><use href="#bookmark" /></svg><strong>Layers</strong>
                  </div>
                  <div class="row lv1">
                    <i class="exp"></i><svg class="row-ico small"><use href="#dbcyl" /></svg><span>C:\Users\RFAIRHUR\Doc</span>
                  </div>
                  <div class="row lv2">
                    <i class="exp"></i><i class="chk"></i><span class="layer-name">TEST_HALF_BUFFERS</span>
                  </div>
                  <div class="row lv3"><i class="sym-line"></i></div>
                  <div class="row lv2">
                    <i class="exp"></i><i class="chk"></i><span class="layer-name picked">TEST_HALF_BUFFERS_</span>
                  </div>
                  <div class="row lv4"><span>CITYNAME</span></div>
                  <div v-for="c in cities" :key="c.name" class="row lv3">
                    <i class="swatch" :style="{ background: c.color }"></i><span :class="{ tight: c.name.length > 15 }">{{ c.name }}</span>
                  </div>
                </div>
                <div class="vscroll">
                  <div class="sb-btn"><i class="tri up"></i></div>
                  <div class="vthumb"><u></u></div>
                  <div class="vtrack"></div>
                  <div class="sb-btn"><i class="tri down"></i></div>
                </div>
              </div>
              <div class="hscroll">
                <i class="tri left"></i>
                <div class="hthumb"><u></u></div>
                <i class="tri right"></i>
              </div>
            </div>
          </div>

          <div class="map">
            <svg class="map-svg" viewBox="245 168 1117 624" xmlns="http://www.w3.org/2000/svg">
              <g shape-rendering="crispEdges">
                <polygon fill="#f5ffff" points="578,167 1362,167 1362,447 1350,447 1333,452 1293,461 1257,469 1239,417 1250,423 1284,425 1329,387 1313,365 1346,305 1299,279 1327,228 1280,228 1160,226 823,223 767,222 655,221 578,220" />
                <polygon fill="#f5ffff" points="603,503 580,535 553,570 529,597 509,587 444,661 459,683 470,678 547,602 573,570 592,540 610,505" />
                <polygon fill="#7f9bb5" points="755,288 781,274 690,388 680,404" />
                <polygon fill="#2a689b" points="552,167 578,167 578,220 655,221 767,222 823,223 785,271 755,288 680,404 640,460 603,503 663,404 763,249 728,248 645,247 573,246 551,245" />
                <polygon fill="#62c64b" points="785,271 819,228 831,222 1160,226 1280,228 1327,228 1299,279 1346,305 1313,365 1329,387 1284,425 1250,423 1239,417 1257,469 1293,461 1333,452 1350,447 1362,446 1362,472 1333,476 1303,485 1273,493 1248,495 1236,487 1222,450 1215,427 1199,416 1210,399 1227,377 1258,398 1275,398 1293,383 1282,367 1311,315 1264,287 1283,253 1160,252 836,249 821,253" />
                <polyline fill="none" stroke="#6f6f6f" points="578,167 578,220 655,221 767,222 823,223" />
                <polyline fill="none" stroke="#6f6f6f" points="831,222 1160,226 1280,228 1327,228 1299,279 1346,305 1313,365 1329,387 1284,425 1250,423 1239,417 1257,469 1293,461 1333,452 1350,447 1362,446" />
                <polyline fill="none" stroke="#a0004f" points="552,167 551,245 573,246 645,247 763,249 663,404 603,503 580,535 553,570 529,597 509,587 444,661 459,683 470,678 547,602 573,570 592,540 610,505 640,460 680,404 755,288 785,271 821,253 836,249 1160,252 1283,253 1264,287 1311,315 1282,367 1293,383 1275,398 1258,398 1227,377 1210,399 1199,416 1215,427 1222,450 1236,487 1248,495 1273,493 1303,485 1333,476 1362,472" />
              </g>
              <polyline fill="none" stroke="#b6b6b6" points="261,790 324,702 343,699 368,675 385,660 412,636 447,688 462,683" />
              <g fill="none" stroke="#000" stroke-width="4" stroke-linecap="round" stroke-linejoin="round">
                <path d="M770 505L711 375M707 402L711 375L737 383" />
                <path d="M563 725L464 687M493 680L464 687L468 712" />
              </g>
              <g class="note">
                <text x="751" y="522">{{ notes[0] }}</text>
                <text x="751" y="541">{{ notes[1] }}</text>
                <text x="751" y="560">{{ notes[2] }}</text>
                <text x="567" y="727">{{ notes[3] }}</text>
              </g>
            </svg>
          </div>

          <div class="right-dock">
            <div v-for="t in dockTabs" :key="t.label" class="dock-tab" :class="{ bare: !t.icon }" :style="{ height: t.h + 'px', marginTop: t.mt + 'px' }">
              <svg v-if="t.icon" class="tab-ico"><use :href="'#' + t.icon" /></svg>
              <span>{{ t.label }}</span>
            </div>
            <div class="dock-stub"><svg class="tab-ico"><use href="#windb" /></svg></div>
          </div>
        </div>

        <div class="status">{{ coords }}</div>

        <div class="taskbar">
          <div class="start">
            <svg class="orb" viewBox="0 0 38 38">
              <defs>
                <radialGradient id="orbfill" cx="50%" cy="30%" r="70%">
                  <stop offset="0" stop-color="#6fc0e0" />
                  <stop offset="0.6" stop-color="#125a8c" />
                  <stop offset="1" stop-color="#083a5c" />
                </radialGradient>
              </defs>
              <circle cx="19" cy="19" r="18.500" fill="url(#orbfill)" stroke="#0e2c44" />
              <path d="M9 13q4-3 9-1l-2 7q-5-2-9 0z" fill="#e4552c" />
              <path d="M19 12q4 2 9 0l-2 7q-5 2-9 0z" fill="#8cc03c" />
              <path d="M7 20q4-2 9 0l-2 7q-5-2-9 0z" fill="#3a90e0" />
              <path d="M17 20q4 2 9 0l-2 7q-5 2-9 0z" fill="#f2c432" />
            </svg>
          </div>
          <div v-for="t in taskItems" :key="t.icon" class="task" :class="{ pinned: t.open, active: t.active }">
            <svg class="task-ico" :class="t.icon"><use :href="'#' + t.icon" /></svg>
          </div>
          <div class="tray">
            <i class="tray-up"></i>
            <svg class="tray-ico"><use href="#flag" /></svg>
            <svg class="tray-ico"><use href="#netw" /></svg>
            <svg class="tray-ico"><use href="#vol" /></svg>
            <div class="clock">
              <div>11:49 AM</div>
              <div>3/27/2015</div>
            </div>
            <div class="show-desktop"></div>
          </div>
        </div>

        <div class="win-bottom"></div>
      </div>
      <div class="desktop"></div>
    </div>
  </div>
</template>

<script setup>
const menus = ['File', 'Edit', 'View', 'Bookmarks', 'Insert', 'Selection', 'Geoprocessing', 'Customize', 'Windows', 'Help']

const coords = '6222521.934  2314741.583 Feet'

const notes = [
  'The tool does not really handle inlet pockets that',
  'narrow to less than 600 feet wide.  This is the best it',
  'currently can do.',
  'The point where the two cities meet is here.'
]

const specials = {
  editor: { kind: 'text', label: 'Editor', w: 41 },
  spatial: { kind: 'text', label: 'Spatial Adjustment', w: 110 },
  scale: { kind: 'combo', label: '1:13,221', w: 146 },
  selectf: { kind: 'combo', label: 'Select features', w: 170, grey: true }
}

// one token per toolbar item, "-" suffix is a disabled button, "*" a pressed one
const parseBar = (spec) =>
  spec.split(/\s+/).map((t) => {
    if (specials[t]) return specials[t]
    if (t === ':') return { kind: 'grip' }
    if (t === '|') return { kind: 'sep' }
    if (t === 'v' || t === 'v-') return { kind: 'drop', off: t === 'v-' }
    if (t === '>') return { kind: 'over' }
    if (t === '>>') return { kind: 'over', dbl: true }
    if (t === '>|') return { kind: 'over', dbl: true, end: true }
    if (t[0] === '_') return { kind: 'gap', w: Number(t.slice(1)) }
    return {
      kind: 'icon',
      name: t.replace(/[-*]$/, ''),
      off: t.endsWith('-'),
      on: t.endsWith('*')
    }
  })

const bars = [
  `: new open save print | cut- copy- paste del- | undo redo- | add v | _2 scale | _1 editbtn* | wintable windb winglobe winred winpy | model _2 > : zoomin* zoomout pan globe | fixin fixout | back fwd- | selfeat v _4 selectf _3 edit- | arrow | identify hyper- bolt- redcorner msg | measure | binoc binoc2 magenta net xy | clock- >|`,
  `: _5 editor | arrow arrowa- | line- curve- poly- v- dots- | sk1 sk2 split redx cycle trim | table props | form _4 > : stack- sun dbarrow arc- | docdn- docup- docbang- | flow- _3 > : _6 spatial | arrow rg rg2- bluerect | grid- envl- gridx- | tarrow | lines | winplus _3 >`,
  `: t3a t3b dotrect- circplus- linedots- | north plustable octa- calc _19 >> : zin2- zout2- pan- dirpan- one- | fixin- fixout- | back- fwd- _50 >> : dotrect- curvered tojoin- cross- redblue | dots- sphere | sevplus docsw tool- rectnodes- nodes- | stack- blob- _3 > : tblplus winarrow winarrow2 winarrow penwin tblarrow | docgear _3 > : cube | blknodes v | star- star2- stepjoin- steps- | rednodes nodes- | checkmap- wincheck- | curx- winx- >|`
].map(parseBar)

const cities = [
  ['BANNING', '#b03070'], ['BEAUMONT', '#2ba02b'], ['BLYTHE', '#3a8fa8'], ['CALIMESA', '#96692d'],
  ['CANYON LAKE', '#2a2ac0'], ['CATHEDRAL CITY', '#2b4fa0'], ['COACHELLA', '#c02a2a'], ['CORONA', '#a8b02f'],
  ['DESERT HOT SPRIN', '#2fbf9f'], ['EASTVALE', '#a040c0'], ['HEMET', '#a03a4a'], ['INDIAN WELLS', '#5f9f3f'],
  ['INDIO', '#4a3aa0'], ['JURUPA VALLEY', '#2d6a9f'], ['LA QUINTA', '#c8a850'], ['LAKE ELSINORE', '#d030a0'],
  ['MENIFEE', '#30c070'], ['MORENO VALLEY', '#8f5a3f'], ['MURRIETA', '#7fc030'], ['NORCO', '#30a8a8'],
  ['PALM DESERT', '#c83060'], ['PALM SPRINGS', '#c08850'], ['PERRIS', '#9f8f20'], ['RANCHO MIRAGE', '#7030c0'],
  ['RIVERSIDE', '#60c850']
].map(([name, color]) => ({ name, color }))

const dockTabs = [
  { label: 'Edit Sketch Properties', icon: 'props', h: 148, mt: 3 },
  { label: 'Snapping Environment', icon: '', h: 138, mt: 12 },
  { label: 'Identify', icon: 'identify', h: 67, mt: 14 },
  { label: 'Attributes', icon: 'table', h: 78, mt: 14 },
  { label: 'Create Features', icon: 'form', h: 116, mt: 1 }
]

const taskItems = [
  { icon: 'media' },
  { icon: 'ie' },
  { icon: 'explorer' },
  { icon: 'arcbig', open: true, active: true },
  { icon: 'chrome' },
  { icon: 'outlook', open: true },
  { icon: 'vs', open: true }
]
</script>

<style>
html, body { margin: 0; padding: 0; background: #3b6ea5; }
</style>

<style scoped>
.screen {
  width: 1440px;
  height: 860px;
  overflow: hidden;
  display: flex;
  flex-direction: column;
  font-family: "Open Sans", "Noto Sans", "Liberation Sans", sans-serif;
  font-size: 12px;
  color: #111;
}
.sprite { display: none; }

/* citrix title */
.citrix {
  height: 20px;
  flex: none;
  display: flex;
  align-items: center;
  border-bottom: 1px solid #c3d3e4;
  background: linear-gradient(90deg, #7f9cc0 0, #5f86b6 90px, #2c5fa4 220px, #23589f 1230px, #4f7cb3 1320px, #4f7cb3 100%);
}
.citrix-ico { width: 16px; height: 16px; margin: 0 5px 0 0; }
.citrix-title { color: #10151c; font-size: 11.5px; }
.citrix-btns { margin-left: auto; margin-right: 3px; margin-top: -2px; display: flex; height: 18px; border: 1px solid #2c4668; border-top: 0; border-radius: 0 0 4px 4px; overflow: hidden; }
.cb { display: flex; align-items: center; justify-content: center; color: #fff; font-size: 11px; font-weight: 700; }
.cb-min { width: 28px; background: linear-gradient(#6d92bd, #4f77a8); border-right: 1px solid #a9c0da; }
.cb-min i { width: 11px; height: 3px; background: #f0f4f8; margin-top: 5px; }
.cb-max { width: 26px; background: linear-gradient(#6d92bd, #4f77a8); border-right: 1px solid #a9c0da; }
.cb-max i { width: 8px; height: 8px; border: 1px solid #eef; box-shadow: 2px -2px 0 -1px #eef, 2px -2px 0 0 #6d92bd; }
.cb-close { width: 47px; background: linear-gradient(#cf6a5c, #b63224); font-size: 13px; }

.rdp-row { flex: 1; display: flex; min-height: 0; }
.rdp { width: 1388px; flex: none; display: flex; flex-direction: column; background: #a9bdd6; }
.desktop { flex: 1; background: #3b6ea5; }

/* remote desktop title */
.rdp-title {
  height: 19px;
  flex: none;
  display: flex;
  align-items: center;
  color: #fff;
  font-weight: 700;
  font-size: 11.5px;
  font-family: "Noto Sans", "Liberation Sans", sans-serif;
  background: linear-gradient(90deg, #10286c, #a6caf0);
  border-bottom: 1px solid #b8b4a8;
  padding-right: 6px;
}
.rdp-ico { width: 16px; height: 16px; margin: 0 2px 0 2px; }
.rdp-btns { margin-left: auto; display: flex; gap: 1px; }
.rb { width: 16px; height: 14px; box-sizing: border-box; background: #d4d0c8; border: 1px solid; border-color: #fff #404040 #404040 #fff; display: flex; align-items: center; justify-content: center; color: #000; font-size: 10px; font-weight: 700; }
.rb-min { width: 7px; height: 2px; background: #000; margin-top: 6px; }
.rb-rest { width: 6px; height: 6px; border: 1px solid #000; border-top-width: 2px; box-shadow: 2px -2px 0 -1px #d4d0c8, 2px -2px 0 0 #000; margin: 2px 2px 0 0; }

/* arcmap title */
.app-title {
  height: 21px;
  flex: none;
  display: flex;
  align-items: center;
  color: #333;
  font-size: 11.6px;
  background: linear-gradient(#92b1d3, #c6d8ea 55%, #e7eff7);
  padding-right: 2px;
  border-right: 4px solid #b4b0a8;
}
.app-ico { width: 18px; height: 18px; margin: 0 7px 0 1px; }
.app-btns { margin-left: auto; display: flex; gap: 3px; }
.ab { width: 30px; height: 16px; border: 1px solid #6d86a6; border-radius: 2px; display: flex; align-items: center; justify-content: center; background: linear-gradient(#d8e4f0, #a8c0da 50%, #b8cce2); box-sizing: border-box; }
.ab-min { width: 10px; height: 3px; border: 1px solid #54606e; background: #eef; margin-top: 4px; box-sizing: border-box; }
.ab-rest { width: 7px; height: 7px; border: 1px solid #3a4a5a; box-shadow: 3px -3px 0 -1px #c8d8ea, 3px -3px 0 0 #3a4a5a; margin: 2px 2px 0 0; }
.ab-close { background: linear-gradient(#e8a498, #c8584a 50%, #c05040); color: #fff; font-size: 12px; font-weight: 700; border-color: #8a4a48; }

/* menu */
.menu { height: 26px; flex: none; display: flex; align-items: center; gap: 16px; padding-left: 12px; background: #fdfcfd; color: #222; font-size: 11.3px; border-right: 4px solid #b4b0a8; }
.menu-item { display: block; }
.menu-item::first-letter { text-decoration: underline; }

/* toolbars */
.toolbars { flex: none; display: flex; flex-direction: column; background: #fdfbfd; border-right: 4px solid #b4b0a8; }
.bar { display: flex; align-items: stretch; background: #fbf9fb; }
.bar0 { height: 24px; margin-bottom: 2px; }
.bar1 { height: 25px; margin-bottom: 1px; }
.bar2 { height: 25px; }
.grip { width: 10px; flex: none; background: radial-gradient(circle at 1px 1px, #8a8a8a 1px, transparent 1px) 6px 3px / 2px 4px repeat-y; }
.sep { width: 6px; flex: none; position: relative; }
.sep::after { content: ""; position: absolute; left: 2px; top: 4px; bottom: 4px; width: 1px; background: #b8b8b8; }
.gap { flex: none; }
.drop { width: 10px; flex: none; position: relative; }
.drop::after { content: ""; position: absolute; left: 2px; top: 11px; border: 3px solid transparent; border-top: 3px solid #111; border-bottom: 0; }
.drop.off::after { border-top-color: #aaa; }
.tb-btn { width: 22px; flex: none; display: flex; align-items: center; justify-content: center; box-sizing: border-box; }
.tb-btn.on { background: #e8f3fb; outline: 1px solid #4a9fe0; outline-offset: -1px; }
.tb-btn.off .ico { filter: grayscale(1) opacity(0.4); }
.ico { width: 18px; height: 18px; display: block; }
.tb-text { flex: none; display: flex; align-items: center; white-space: nowrap; color: #111; gap: 2px; font-size: 11.5px; }
.tb-text b { border: 3px solid transparent; border-top-color: #111; border-bottom: 0; margin-top: 2px; }
.combo { flex: none; height: 19px; align-self: center; box-sizing: border-box; display: flex; align-items: center; justify-content: space-between; padding: 0 4px 0 3px; background: #fff; border: 1px solid #c8c8c8; border-radius: 2px; color: #222; font-size: 11px; }
.combo.grey { background: linear-gradient(#f4f4f4, #d0d0d0); border-color: #888; letter-spacing: -0.25px; }
.combo b { border: 4px solid transparent; border-top-color: #111; border-bottom: 0; }
.over { width: 10px; flex: none; position: relative; background: linear-gradient(#f4f4f4, #b0b0b0); }
.over.end { margin-left: auto; margin-right: 0; }
.over em { position: absolute; left: 0; right: 0; top: 1px; text-align: center; font-style: normal; font-size: 6px; line-height: 8px; color: #222; font-family: "DejaVu Sans", sans-serif; white-space: nowrap; }
.over::before { content: ""; position: absolute; left: 2px; bottom: 6px; width: 6px; height: 1px; background: #111; }
.over::after { content: ""; position: absolute; left: 2px; bottom: 2px; border: 3px solid transparent; border-top-color: #111; border-bottom: 0; }

/* workspace */
.workspace { height: 627px; flex: none; display: flex; background: #f8f4f8; padding-top: 2px; box-sizing: border-box; }
.left-dock { width: 22px; flex: none; padding-top: 3px; box-sizing: border-box; }
.results-tab { width: 19px; height: 68px; box-sizing: border-box; border: 1px solid #b0b0b0; border-left: 0; border-radius: 0 0 4px 4px; display: flex; flex-direction: column; align-items: center; gap: 2px; color: #555; }
.results-tab span, .dock-tab span { writing-mode: vertical-rl; white-space: nowrap; }
.tab-ico { width: 16px; height: 16px; flex: none; }
.results-tab .tab-ico { margin-top: 2px; }

.toc { width: 216px; flex: none; display: flex; flex-direction: column; }
.toc-head { height: 19px; flex: none; display: flex; align-items: center; justify-content: space-between; padding: 0 4px; background: linear-gradient(90deg, #ccd9ea, #dfe8f2); color: #555; }
.toc-head-btns { display: flex; align-items: center; gap: 8px; color: #333; }
.pin { width: 5px; height: 7px; border: 1px solid #333; border-bottom-width: 2px; display: block; margin-right: 1px; box-sizing: border-box; font-style: normal; }
.close { font-style: normal; font-size: 11px; }
.toc-tools { height: 25px; flex: none; display: flex; align-items: center; padding-left: 4px; }
.toc-tools .tb-btn { height: 23px; }
.toc-tools .sep { height: 23px; }
.tree-box { flex: 1; min-height: 0; border: 1px solid #8a8a9a; background: #fff; display: flex; flex-direction: column; box-sizing: border-box; width: 215px; }
.tree-top { flex: 1; min-height: 0; display: flex; }
.tree { width: 196px; flex: none; overflow: hidden; padding-top: 1px; letter-spacing: -0.12px; }
.row { height: 18px; display: flex; align-items: center; white-space: nowrap; color: #111; }
.row strong { font-weight: 700; margin-left: 3px; font-size: 11.3px; }
.layer-name { letter-spacing: -0.2px; }
.tight { letter-spacing: -0.4px; }
.lv0 { padding-left: 8px; }
.lv1 { padding-left: 27px; }
.lv2 { padding-left: 46px; }
.lv3 { padding-left: 78px; }
.lv4 { padding-left: 101px; }
.exp { width: 9px; height: 9px; flex: none; box-sizing: border-box; border: 1px solid #9aa; background: #f4f4f4; position: relative; margin-right: 5px; }
.exp::after { content: ""; position: absolute; left: 1px; right: 1px; top: 3px; height: 1px; background: #444; }
.row-ico { width: 18px; height: 18px; flex: none; }
.row-ico.small { width: 16px; height: 16px; margin-right: 4px; }
.lv1 .exp { margin-right: 7px; }
.lv2 .exp { margin-right: 8px; }
.chk { width: 11px; height: 11px; flex: none; box-sizing: border-box; border: 1px solid #222; margin-right: 8px; position: relative; background: #fff; }
.chk::after { content: ""; position: absolute; left: 2px; top: 0; width: 3px; height: 6px; border: solid #111; border-width: 0 2px 2px 0; transform: rotate(40deg); }
.picked { background: #3399ff; color: #fff; padding: 0 0 0 2px; margin-left: -2px; letter-spacing: -0.5px; width: 115px; line-height: 16px; flex: none; box-sizing: border-box; }
.sym-line { width: 14px; height: 1px; background: #a0004f; }
.swatch { width: 15px; height: 11px; flex: none; box-sizing: border-box; border: 1px solid #808080; margin-right: 3px; }
.vscroll { flex: 1; display: flex; flex-direction: column; background: #f3f3f3; }
.sb-btn { height: 18px; flex: none; display: flex; align-items: center; justify-content: center; }
.vthumb { height: 427px; flex: none; margin: 0 1px; box-sizing: border-box; border: 1px solid #aaa; border-radius: 2px; background: linear-gradient(90deg, #f4f4f4, #d8d8d8); display: flex; align-items: center; justify-content: center; }
.vthumb u { width: 7px; height: 5px; border-top: 1px solid #666; border-bottom: 1px solid #666; box-sizing: border-box; }
.vtrack { flex: 1; }
.tri { width: 0; height: 0; border: 3px solid transparent; display: block; }
.tri.up { border-top: 0; border-bottom: 4px solid #444; }
.tri.down { border-bottom: 0; border-top: 4px solid #444; }
.tri.left { border-left: 0; border-right: 4px solid #333; }
.tri.right { border-right: 0; border-left: 4px solid #333; }
.hscroll { height: 17px; flex: none; display: flex; align-items: center; background: #f3f3f3; padding-left: 7px; padding-right: 25px; border-top: 1px solid #eee; }
.hthumb { width: 88px; height: 14px; margin-left: 8px; box-sizing: border-box; border: 1px solid #aaa; border-radius: 2px; background: linear-gradient(#f4f4f4, #d4d4d4); display: flex; align-items: center; justify-content: center; }
.hthumb u { width: 6px; height: 6px; border-left: 1px solid #666; border-right: 1px solid #666; box-sizing: border-box; }
.hscroll .right { margin-left: auto; }

.map { width: 1119px; flex: none; margin-left: 5px; box-sizing: border-box; border-left: 2px solid #7a7a7a; border-top: 1px solid #8a8a8a; background: #e6e6e6; overflow: hidden; }
.map-svg { display: block; width: 1117px; height: 624px; }
.note text { font-family: "Noto Sans", "Liberation Sans", sans-serif; font-weight: 700; font-size: 13.8px; fill: #000; white-space: pre; }

.right-dock { flex: 1; display: flex; flex-direction: column; padding-left: 2px; background: #fff; border-right: 4px solid #b4b0a8; min-width: 0; }
.dock-tab { flex: none; width: 20px; box-sizing: border-box; border: 1px solid #aaa; border-right: 0; border-radius: 4px 0 0 4px; background: #f6f2f6; display: flex; flex-direction: column; align-items: center; gap: 3px; padding-top: 2px; color: #555; overflow: hidden; font-size: 11.6px; }
.dock-tab.bare { padding-top: 5px; }
.dock-stub { width: 20px; margin-top: 15px; box-sizing: border-box; border: 1px solid #aaa; border-right: 0; border-bottom: 0; border-radius: 4px 0 0 0; background: #f6f2f6; flex: 1; display: flex; justify-content: center; }

/* status */
.status { height: 21px; flex: none; box-sizing: border-box; display: flex; align-items: center; justify-content: flex-end; padding-right: 96px; font-size: 10.7px; white-space: pre; background: #f8f4f8; border-right: 4px solid #b4b0a8; color: #111; }

/* taskbar */
.taskbar { height: 40px; flex: none; display: flex; align-items: stretch; gap: 3px; border-top: 1px solid #4a5a6a; box-sizing: border-box; background: linear-gradient(90deg, #6c8eb2 0, #6c8eb2 60px, #a7c4e0 72px, #a7c4e0 1160px, #8094b0 1190px, #7f93ad 100%); border-right: 4px solid #b4b0a8; }
.start { width: 56px; flex: none; display: flex; align-items: center; justify-content: center; }
.orb { width: 38px; height: 38px; display: block; }
.task { width: 59px; flex: none; display: flex; align-items: center; justify-content: center; box-sizing: border-box; border: 1px solid transparent; border-radius: 3px; margin: 1px 0 0; }
.task.pinned { border-color: #56718e; background: linear-gradient(#bcd4ea, #a4c1de 60%, #b4cee6); }
.task.active { border-color: #5a6a7a; background: linear-gradient(#e4eef8, #c8dbee 60%, #dbe8f4); }
.task-ico { width: 32px; height: 32px; }
.task-ico.vs { height: 22px; }
.tray { margin-left: auto; display: flex; align-items: center; color: #fff; }
.tray-up { width: 0; height: 0; border: 4px solid transparent; border-top: 0; border-bottom: 5px solid #eef2f6; margin-right: 11px; }
.tray-ico { width: 18px; height: 20px; margin-right: 7px; }
.clock { width: 62px; text-align: center; line-height: 17px; color: #eef3f8; margin-left: 2px; font-size: 11px; }
.show-desktop { width: 13px; height: 36px; margin-left: 8px; border: 1px solid #c8d4e0; background: linear-gradient(#5a6e86, #7f93ad); box-sizing: border-box; }
.win-bottom { height: 3px; flex: none; background: #c8c4b8; border-bottom: 2px solid #3a4a5a; }
</style>
